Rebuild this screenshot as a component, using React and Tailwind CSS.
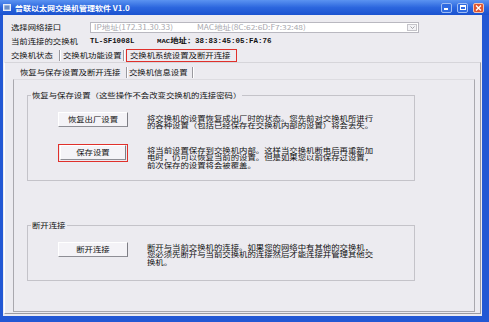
const sq = 'inline-block shrink-0 whitespace-nowrap scale-y-[0.82]'

function Btn({ children, className = '' }) {
  return (
    <div
      className={`h-[15px] shrink-0 flex items-center justify-center bg-[#f4f3f7] border border-t-white border-l-white border-r-[#7d7d84] border-b-[#8e8e95] ${className}`}
    >
      <span className={sq}>{children}</span>
    </div>
  )
}

function Sep() {
  return (
    <div className="flex shrink-0 h-[11px]">
      <div className="w-px bg-[#9a999f]" />
      <div className="w-px bg-white" />
    </div>
  )
}

export default function App() {
  return (
    <div className="w-[489px] h-[322px] flex flex-col overflow-hidden bg-[#2358d4] font-['Noto_Sans_CJK_SC',sans-serif] text-[8.4px] leading-none text-[#111]">
      {/* title bar */}
      <div className="h-[15px] shrink-0 flex items-center pl-[3px] pr-[5px] bg-gradient-to-b from-[#5b93f1] via-[#2c66de] to-[#1a52cf]">
        <svg width="8" height="8" viewBox="0 0 8 8">
          <rect x="0.5" y="0.5" width="7" height="6" fill="#c9d6ee" stroke="#e8eefa" />
          <rect x="1.5" y="1.5" width="5" height="4" fill="#6b8fc8" />
        </svg>
        <span className="ml-[4px] text-white font-bold text-[8px] inline-block whitespace-nowrap scale-y-[0.9]">
          普联以太网交换机管理软件 V1.0
        </span>
        <div className="ml-auto flex items-center gap-[5px]">
          <div className="w-[11px] h-[10px] rounded-[2px] border border-[#9fbcf3] bg-[#2f6be2] flex items-end pl-[2px] pb-[2px]">
            <div className="w-[4px] h-[1.5px] bg-white" />
          </div>
          <div className="w-[11px] h-[10px] rounded-[2px] border border-[#9fbcf3] bg-[#2f6be2] flex items-center justify-center">
            <div className="w-[6px] h-[5px] border border-white border-t-2" />
          </div>
          <div className="w-[11px] h-[10px] rounded-[2px] border border-[#f3c3b0] bg-[#de5530] flex items-center justify-center">
            <svg width="7" height="6" viewBox="0 0 7 6">
              <path d="M1 0.5 L6 5.5 M6 0.5 L1 5.5" stroke="white" strokeWidth="1.4" />
            </svg>
          </div>
        </div>
      </div>

      {/* client area */}
      <div className="flex-1 ml-[3px] mr-[7px] mb-[6px] bg-[#ecebf0] flex flex-col">
        {/* interface select */}
        <div className="mt-[5px] h-[14px] flex items-center">
          <span className={`${sq} pl-[8px] w-[87px]`}>选择网络接口</span>
          <div className="w-[329px] h-[11px] bg-white border border-[#b9b8c0] flex items-center pl-[3px] text-[#a8a8ae]">
            <span className={`${sq} w-[103px]`}>IP地址(172.31.30.33)</span>
            <span className={sq}>MAC地址(8C:62:6D:F7:32:48)</span>
            <div className="ml-auto mr-[1px] w-[10px] h-[7px] border border-[#c5c4ca] bg-[#f3f3f6] flex items-center justify-center">
              <svg width="5" height="3" viewBox="0 0 5 3">
                <path d="M0.5 0.5 L2.5 2.5 L4.5 0.5" stroke="#9a9aa0" fill="none" strokeWidth="0.9" />
              </svg>
            </div>
          </div>
        </div>

        {/* current switch */}
        <div className="h-[15px] flex items-center">
          <span className={`${sq} pl-[8px] w-[87px]`}>当前连接的交换机</span>
          <span className="w-[67px] shrink-0 font-['Liberation_Mono',monospace] font-bold text-[7.4px]">TL-SF1008L</span>
          <span className={`${sq} font-bold w-[38px]`}>
            <span className="font-['Liberation_Mono',monospace] text-[7.3px]">MAC</span>地址：
          </span>
          <span className="font-['Liberation_Mono',monospace] font-bold text-[7.5px]">38:83:45:05:FA:76</span>
        </div>

        {/* top tabs */}
        <div className="h-[13px] flex items-center">
          <span className={`${sq} pl-[8px] w-[56px]`}>交换机状态</span>
          <Sep />
          <span className={`${sq} ml-[2px] w-[60px]`}>交换机功能设置</span>
          <Sep />
          <div className="ml-[1px] w-[111px] h-[13px] shrink-0 border-[1.5px] border-[#e0302b] flex items-center pl-[3px]">
            <span className={sq}>交换机系统设置及断开连接</span>
          </div>
        </div>

        {/* outer tab page */}
        <div className="flex-1 ml-[1px] mr-[1px] mb-[2px] border border-t-[#d6d5da] border-l-white border-r-[#9c9ba2] border-b-[#9c9ba2] flex flex-col">
          <div className="mt-[3px] h-[13px] flex items-center pl-[15px]">
            <span className={`${sq} w-[106px]`}>恢复与保存设置及断开连接</span>
            <Sep />
            <span className={`${sq} ml-[1px] w-[63px]`}>交换机信息设置</span>
            <Sep />
          </div>

          {/* inner tab page */}
          <div className="flex-1 ml-[8px] mr-[5px] mb-[1px] border border-t-[#dddce1] border-l-[#a9a8ae] border-r-[#a9a8ae] border-b-[#a9a8ae] flex flex-col">
            <fieldset className="mt-[10.5px] ml-[13px] w-[388px] h-[90px] border border-[#c4c3c9]">
              <legend className="ml-[3px] px-[1px] leading-[9px]">
                <span className={sq}>恢复与保存设置（这些操作不会改变交换机的连接密码）</span>
              </legend>
              <div className="mt-[12px] h-[16px] flex items-start">
                <Btn className="ml-[30px] w-[70px]">恢复出厂设置</Btn>
                <p className="ml-[19px] mt-[2.5px] whitespace-nowrap leading-[9.3px] origin-top-left scale-y-[0.82]">
                  将交换机的设置恢复成出厂时的状态。您先前对交换机所进行
                  <br />
                  的各种设置（包括已经保存在交换机内部的设置）将会丢失。
                </p>
              </div>
              <div className="mt-[16px] h-[18px] flex items-start">
                <div className="ml-[30px] w-[70px] h-[18px] shrink-0 border-[1.5px] border-[#e0302b] flex items-center justify-center">
                  <Btn className="w-[66px] h-[14px]">保存设置</Btn>
                </div>
                <p className="ml-[19px] mt-[2.5px] whitespace-nowrap leading-[9.3px] origin-top-left scale-y-[0.82]">
                  将当前设置保存到交换机内部。这样当交换机断电后再重新加
                  <br />
                  电时，仍可以恢复当前的设置。但是如果您以前保存过设置，
                  <br />
                  前次保存的设置将会被覆盖。
                </p>
              </div>
            </fieldset>

            <fieldset className="mt-[40px] ml-[13px] w-[388px] h-[60px] border border-[#c4c3c9]">
              <legend className="ml-[3px] px-[1px] leading-[9px]">
                <span className={sq}>断开连接</span>
              </legend>
              <div className="mt-[12.5px] h-[16px] flex items-start">
                <Btn className="ml-[30px] w-[70px]">断开连接</Btn>
                <p className="ml-[19px] mt-[0.5px] whitespace-nowrap leading-[9.3px] origin-top-left scale-y-[0.82]">
                  断开与当前交换机的连接。如果您的网络中有其他的交换机，
                  <br />
                  您必须先断开与当前交换机的连接然后才能连接并管理其他交
                  <br />
                  换机。
                </p>
              </div>
            </fieldset>
          </div>
        </div>
      </div>
    </div>
  )
}
